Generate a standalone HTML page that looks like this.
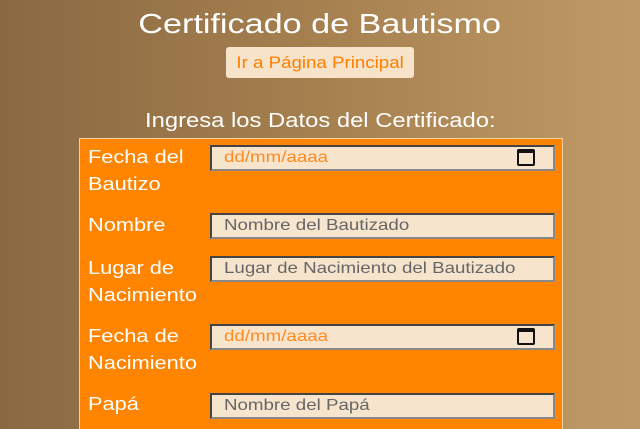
<!DOCTYPE html>
<html><head><style>
body{margin:0;width:640px;height:426px;overflow:hidden;background:linear-gradient(90deg,#8a6942 0%,#a6804f 50%,#c09a66 100%);font-family:"Liberation Sans",sans-serif;position:relative}
.t{position:absolute;left:0;width:640px;text-align:center;color:#fff}
.t span,.btn span{display:inline-block}
.btn{position:absolute;left:226px;top:47px;width:188px;height:31px;background:#f6e3c9;border-radius:3px;color:#ff7f00;font-size:17px;line-height:31px;text-align:center}
.box{position:absolute;left:79px;top:138px;width:482px;height:290px;background:#ff8500;border:1px solid #f2d2a5;border-bottom:none}
.l{position:absolute;left:8px;color:#fff;font-size:18px;line-height:27px;transform:scaleX(1.21);transform-origin:0 0}
.i{position:absolute;left:130px;width:329px;height:22px;background:#f6e4cc;border:2px solid #444;border-right-color:#888;border-bottom-color:#888;font-size:16px;line-height:22px;padding-left:12px;color:#666}
.i span{display:inline-block;transform:scaleX(1.17);transform-origin:0 0}
.d{color:#ff8a20}
.cal{position:absolute;right:18px;top:2px;width:18px;height:17px;border:2px solid #111;border-top-width:4px;border-radius:2px;box-sizing:border-box}
</style></head><body>
<div class="t" style="top:8px;font-size:28px"><span style="transform:scaleX(1.22)">Certificado de Bautismo</span></div>
<div class="btn"><span style="transform:scaleX(1.1)">Ir a Página Principal</span></div>
<div class="t" style="top:110px;font-size:20px"><span style="transform:scaleX(1.19)">Ingresa los Datos del Certificado:</span></div>
<div class="box">
<div class="l" style="top:5px">Fecha del<br>Bautizo</div>
<div class="i d" style="top:6px"><span>dd/mm/aaaa</span><i class="cal"></i></div>
<div class="l" style="top:73px">Nombre</div>
<div class="i" style="top:74px"><span>Nombre del Bautizado</span></div>
<div class="l" style="top:116px">Lugar de<br>Nacimiento</div>
<div class="i" style="top:117px"><span>Lugar de Nacimiento del Bautizado</span></div>
<div class="l" style="top:184px">Fecha de<br>Nacimiento</div>
<div class="i d" style="top:185px"><span>dd/mm/aaaa</span><i class="cal"></i></div>
<div class="l" style="top:252px">Papá</div>
<div class="i" style="top:254px"><span>Nombre del Papá</span></div>
</div>
</body></html>
